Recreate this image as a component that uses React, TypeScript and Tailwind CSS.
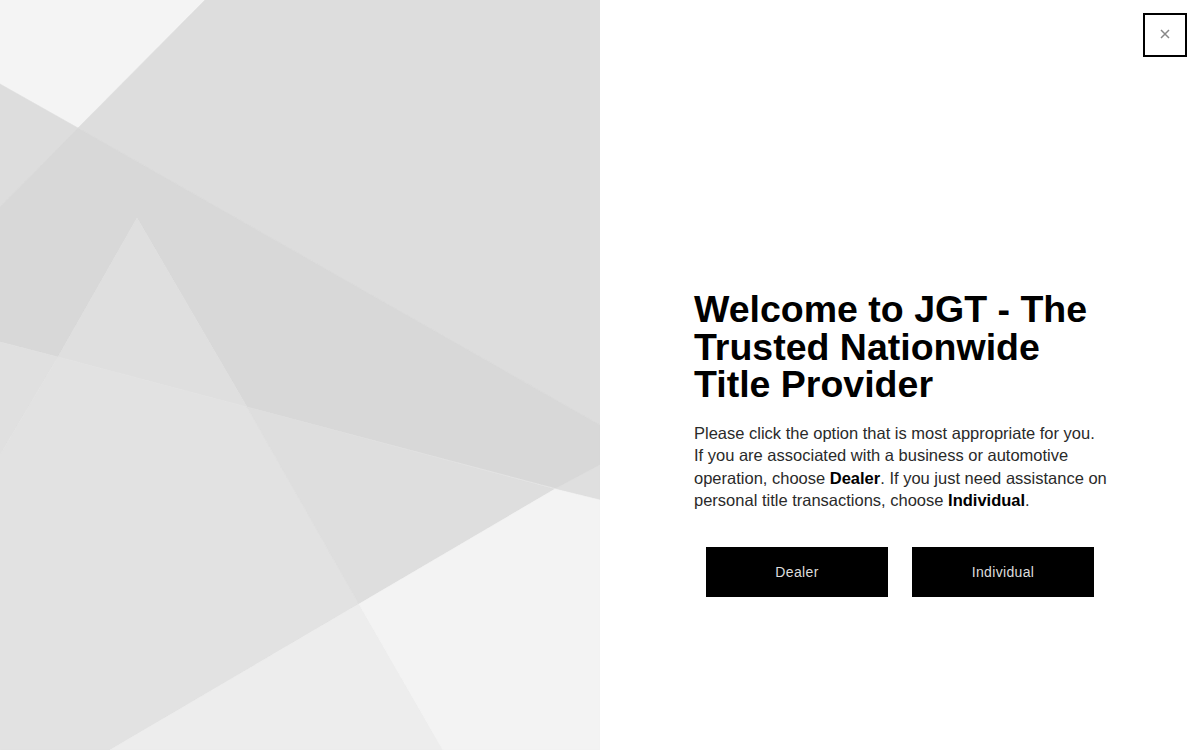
import React from "react";

const shapes = [
  { points: "205,0 600,0 600,425 78,128", fill: "#dddddd" },
  { points: "0,84 78,128 0,207", fill: "#dddddd" },
  { points: "0,207 78,128 600,425 600,500 247,407 137,218 58,357 0,342", fill: "#d8d8d8" },
  { points: "137,218 247,407 58,357", fill: "#dfdfdf" },
  { points: "0,342 58,357 0,455", fill: "#e0e0e0" },
  { points: "58,357 247,407 359,604 110,750 0,750 0,455", fill: "#e2e2e2" },
  { points: "247,407 555,489 359,604", fill: "#dedede" },
  { points: "555,489 600,465 600,500", fill: "#dfdfdf" },
  { points: "110,750 359,604 443,750", fill: "#ededed" },
  { points: "359,604 555,489 600,500 600,750 443,750", fill: "#f3f3f3" },
];

const Backdrop = () => (
  <svg viewBox="0 0 600 750" className="block h-full w-full">
    <rect width="600" height="750" fill="#f4f4f4" />
    {shapes.map((s) => (
      <polygon key={s.points} points={s.points} fill={s.fill} stroke={s.fill} strokeWidth="0.6" />
    ))}
  </svg>
);

const App = () => {
  return (
    <div className="relative flex h-[750px] w-[1200px] overflow-hidden bg-white font-['Liberation_Sans',Arial,sans-serif]">
      <div className="h-full w-[600px]">
        <Backdrop />
      </div>
      <div className="flex w-[600px] flex-col items-center pt-[291px]">
        <div className="ml-[2px] w-[414px]">
          <h1 className="text-[37.5px] font-bold leading-[37.5px] text-black">
            Welcome to JGT - The Trusted Nationwide Title Provider
          </h1>
          <p className="mt-[18px] text-[16.5px] leading-[22.5px] text-[#2a2a2a]">
            Please click the option that is most appropriate for you. If you are associated with a
            business or automotive operation, choose <b className="text-black">Dealer</b>. If you
            just need assistance on personal title transactions, choose{" "}
            <b className="text-black">Individual</b>.
          </p>
        </div>
        <div className="mt-[35px] flex gap-6">
          <button className="h-[50px] w-[182px] bg-black pt-px text-sm tracking-[0.35px] text-[#dddddd]">
            Dealer
          </button>
          <button className="h-[50px] w-[182px] bg-black pt-px text-sm tracking-[0.35px] text-[#dddddd]">
            Individual
          </button>
        </div>
      </div>
      <button className="absolute right-[13px] top-[13px] flex h-[44px] w-[44px] items-center justify-center border-2 border-black text-[#888]">
        <svg width="10" height="10" viewBox="0 0 10 10" fill="none" stroke="currentColor" strokeWidth="1.5" className="-translate-y-px">
          <path d="M1 1l8 8M9 1l-8 8" />
        </svg>
      </button>
    </div>
  );
};

export default App;
